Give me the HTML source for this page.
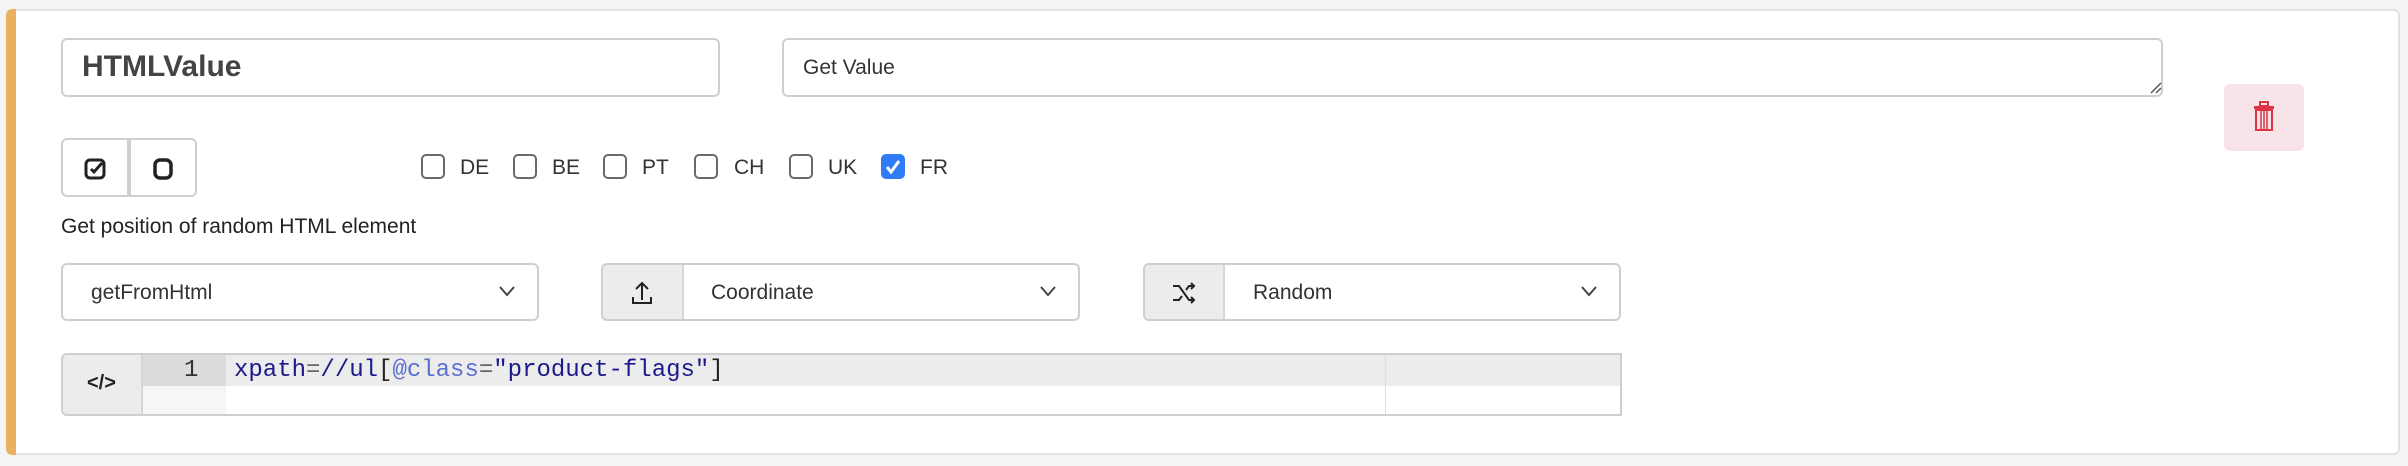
<!DOCTYPE html>
<html><head><style>
*{box-sizing:border-box}
body{margin:0;width:2408px;height:466px;background:#f4f4f4;font-family:"Liberation Sans",sans-serif;color:#333;position:relative;overflow:hidden}
.card{position:absolute;left:6px;top:9px;width:2394px;height:446px;background:#fff;border:2px solid #e2e2e2;border-left:none;border-radius:6px;overflow:hidden}
.bar{position:absolute;left:6px;top:9px;width:10px;height:446px;background:#e8b060;border-radius:6px 0 0 6px}
.box{position:absolute;border:2px solid #cfcfcf;border-radius:6px;background:#fff}
.t{position:absolute;white-space:nowrap}
.cb{position:absolute;top:154px;width:24px;height:25px;border:2px solid #6a6a6a;border-radius:5px;background:#fff}
.lbl{position:absolute;top:156px;font-size:21px;color:#333}
.addon{position:absolute;top:0;bottom:0;left:0;background:#ececec;border-right:2px solid #d6d6d6}
.chev{position:absolute;right:22px;top:20px}
</style></head><body>
<div class="card"></div>
<div class="bar"></div>

<div class="box" style="left:61px;top:38px;width:659px;height:59px"></div>
<div class="t" style="left:82px;top:50px;font-size:30px;font-weight:bold;color:#444">HTMLValue</div>

<div class="box" style="left:782px;top:38px;width:1381px;height:59px"></div>
<div class="t" style="left:803px;top:56px;font-size:21px;color:#333">Get Value</div>
<svg style="position:absolute;left:2150px;top:82px" width="12" height="12"><path d="M1 11L11 1M6 11L11 6" stroke="#555" stroke-width="1.5"/></svg>

<div style="position:absolute;left:2224px;top:84px;width:80px;height:67px;background:#f8e4e8;border-radius:6px"></div>
<svg style="position:absolute;left:2252px;top:101px" width="24" height="30" viewBox="0 0 24 30"><rect x="8" y="1" width="8" height="4" fill="none" stroke="#dc3545" stroke-width="2"/><rect x="2" y="5" width="20" height="3" fill="#dc3545"/><rect x="4" y="9" width="16" height="20" fill="none" stroke="#dc3545" stroke-width="2"/><path d="M9 10v18M12 10v18M15 10v18" stroke="#dc3545" stroke-width="1.5"/></svg>

<div class="box" style="left:61px;top:138px;width:68px;height:59px;border-radius:6px 0 0 6px"></div>
<div class="box" style="left:129px;top:138px;width:68px;height:59px;border-radius:0 6px 6px 0"></div>
<svg style="position:absolute;left:83px;top:157px" width="24" height="24" viewBox="0 0 24 24"><rect x="3" y="3" width="18" height="18" rx="4" fill="none" stroke="#222" stroke-width="3"/><path d="M8 12l3 3 8-9" fill="none" stroke="#222" stroke-width="3"/></svg>
<svg style="position:absolute;left:151px;top:157px" width="24" height="24" viewBox="0 0 24 24"><rect x="4" y="3" width="16" height="18" rx="5" fill="none" stroke="#222" stroke-width="3.5"/></svg>

<div class="cb" style="left:421px"></div><div class="lbl" style="left:460px">DE</div>
<div class="cb" style="left:513px"></div><div class="lbl" style="left:552px">BE</div>
<div class="cb" style="left:603px"></div><div class="lbl" style="left:642px">PT</div>
<div class="cb" style="left:694px"></div><div class="lbl" style="left:734px">CH</div>
<div class="cb" style="left:789px"></div><div class="lbl" style="left:828px">UK</div>
<div class="cb" style="left:881px;background:#2f7cf6;border-color:#2f7cf6"><svg width="20" height="21" viewBox="0 0 20 21"><path d="M4 11l4 5 8-11" fill="none" stroke="#fff" stroke-width="3"/></svg></div><div class="lbl" style="left:920px">FR</div>

<div class="t" style="left:61px;top:215px;font-size:21px;color:#222">Get position of random HTML element</div>

<div class="box" style="left:61px;top:263px;width:478px;height:58px"><div class="t" style="left:28px;top:16px;font-size:21px">getFromHtml</div><svg class="chev" width="16" height="12"><path d="M1 2l7 8 7-8" fill="none" stroke="#444" stroke-width="2"/></svg></div>

<div class="box" style="left:601px;top:263px;width:479px;height:58px;overflow:hidden"><div class="addon" style="width:81px"><svg style="position:absolute;left:27px;top:15px" width="24" height="26" viewBox="0 0 24 26"><path d="M12 20V3M6 9l6-6 6 6M3 17v6h18v-6" fill="none" stroke="#222" stroke-width="2"/></svg></div><div class="t" style="left:108px;top:16px;font-size:21px">Coordinate</div><svg class="chev" width="16" height="12"><path d="M1 2l7 8 7-8" fill="none" stroke="#444" stroke-width="2"/></svg></div>

<div class="box" style="left:1143px;top:263px;width:478px;height:58px;overflow:hidden"><div class="addon" style="width:80px"><svg style="position:absolute;left:26px;top:16px" width="26" height="24" viewBox="0 0 26 24"><path d="M2 5h6l10 14h5M2 19h6l3-4M15 9l3-4h5M20 2l3 3-3 3M20 16l3 3-3 3" fill="none" stroke="#222" stroke-width="2"/></svg></div><div class="t" style="left:108px;top:16px;font-size:21px">Random</div><svg class="chev" width="16" height="12"><path d="M1 2l7 8 7-8" fill="none" stroke="#444" stroke-width="2"/></svg></div>

<div class="box" style="left:61px;top:353px;width:1561px;height:63px;overflow:hidden;border-radius:6px 0 0 6px">
<div class="addon" style="width:80px"><div class="t" style="left:24px;top:17px;font-size:20px;font-weight:bold;color:#222">&lt;/&gt;</div></div>
<div style="position:absolute;left:80px;top:0;width:83px;height:59px;background:#f6f6f6"></div>
<div style="position:absolute;left:80px;top:0;width:83px;height:31px;background:#dcdcdc"></div>
<div style="position:absolute;left:163px;top:0;right:0;height:31px;background:#ececec"></div>
<div style="position:absolute;left:1322px;top:0;width:1px;height:59px;background:#ddd"></div>
<div class="t" style="left:121px;top:2px;font-family:'Liberation Mono',monospace;font-size:24px;color:#333">1</div>
<div class="t" style="left:171px;top:2px;font-family:'Liberation Mono',monospace;font-size:24px;color:#1a1a8a">xpath<span style="color:#666">=</span>//ul<span style="color:#222">[</span><span style="color:#5a6fd0">@class</span><span style="color:#666">=</span>"product-flags"<span style="color:#222">]</span></div>
</div>
</body></html>
